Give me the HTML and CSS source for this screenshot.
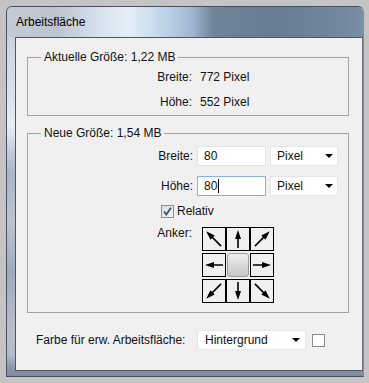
FILE: index.html
```html
<!DOCTYPE html>
<html>
<head>
  <meta charset="UTF-8">
  <title>Arbeitsfläche</title>
  <link rel="stylesheet" href="styles.css">
</head>
<body>
  <div class="window">
    <div class="titlebar">Arbeitsfläche</div>
    <div class="frame">
      <div class="content">

        <!-- current size -->
        <fieldset class="group group-current">
          <legend>Aktuelle Größe: 1,22 MB</legend>
          <div class="info-row"><span class="label">Breite:</span><span class="value">772 Pixel</span></div>
          <div class="info-row"><span class="label">Höhe:</span><span class="value">552 Pixel</span></div>
        </fieldset>

        <!-- new size -->
        <fieldset class="group group-new">
          <legend>Neue Größe: 1,54 MB</legend>
          <div class="field-row">
            <span class="label">Breite:</span>
            <div class="textbox">80</div>
            <div class="select">Pixel<span class="caret"></span></div>
          </div>
          <div class="field-row second">
            <span class="label">Höhe:</span>
            <div class="textbox focused">80<span class="cursor"></span></div>
            <div class="select">Pixel<span class="caret"></span></div>
          </div>
          <div class="check-row">
            <span class="checkbox">
              <svg width="11" height="11" viewBox="0 0 11 11"><path d="M2 5.5L4.3 8.5L9 1.8" fill="none" stroke="#3d4f78" stroke-width="1.8"/></svg>
            </span>
            Relativ
          </div>
          <div class="anchor-row">
            <span class="label">Anker:</span>
            <div class="anchor-grid">
              <div class="cell"><svg viewBox="0 0 22 22"><g transform="rotate(315 11 11)"><path d="M11 21V7" stroke="#000" stroke-width="1.6"/><path d="M11 0L8 9H14Z"/></g></svg></div>
              <div class="cell"><svg viewBox="0 0 22 22"><path d="M11 20V9" stroke="#000" stroke-width="1.6"/><path d="M11 2L8 11H14Z"/></svg></div>
              <div class="cell"><svg viewBox="0 0 22 22"><g transform="rotate(45 11 11)"><path d="M11 21V7" stroke="#000" stroke-width="1.6"/><path d="M11 0L8 9H14Z"/></g></svg></div>
              <div class="cell"><svg viewBox="0 0 22 22"><g transform="rotate(270 11 11)"><path d="M11 20V9" stroke="#000" stroke-width="1.6"/><path d="M11 2L8 11H14Z"/></g></svg></div>
              <div class="cell center"></div>
              <div class="cell"><svg viewBox="0 0 22 22"><g transform="rotate(90 11 11)"><path d="M11 20V9" stroke="#000" stroke-width="1.6"/><path d="M11 2L8 11H14Z"/></g></svg></div>
              <div class="cell"><svg viewBox="0 0 22 22"><g transform="rotate(225 11 11)"><path d="M11 21V7" stroke="#000" stroke-width="1.6"/><path d="M11 0L8 9H14Z"/></g></svg></div>
              <div class="cell"><svg viewBox="0 0 22 22"><g transform="rotate(180 11 11)"><path d="M11 20V9" stroke="#000" stroke-width="1.6"/><path d="M11 2L8 11H14Z"/></g></svg></div>
              <div class="cell"><svg viewBox="0 0 22 22"><g transform="rotate(135 11 11)"><path d="M11 21V7" stroke="#000" stroke-width="1.6"/><path d="M11 0L8 9H14Z"/></g></svg></div>
            </div>
          </div>
        </fieldset>

        <!-- canvas extension colour -->
        <div class="fill-row">
          <span class="fill-label">Farbe für erw. Arbeitsfläche:</span>
          <div class="select wide">Hintergrund<span class="caret"></span></div>
          <span class="swatch"></span>
        </div>

      </div>
    </div>
  </div>
</body>
</html>
```

FILE: styles.css
```css
body {
  margin: 0;
  width: 369px;
  height: 383px;
  overflow: hidden;
  background: #c4c4c4;
  font-family: "Liberation Sans", Arial, sans-serif;
  font-size: 12px;
  color: #111;
}

.window {
  margin: 6px 0 0 6px;
  width: 358px;
  height: 371px;
  box-sizing: border-box;
  border: 1px solid #4b5058;
  border-right-color: #8a8e94;
  border-radius: 6px 6px 0 0;
  display: flex;
  flex-direction: column;
  background: linear-gradient(to bottom, #c6ccd4 0%, #d9e3ee 25%, #e6edf4 32%, #a9b5c6 45%, #bcc4ce 58%, #9eabbf 72%, #b7bfca 88%, #aeb8c6 100%);
  overflow: hidden;
}

.titlebar {
  height: 30px;
  line-height: 31px;
  padding-left: 9px;
  color: #000;
  background: linear-gradient(to right, #c4cad3 0%, #bcc4cf 14%, #d6e2ee 26%, #e4eef7 34%, #bfd5ea 44%, #9fb7cf 52%, #6f8499 58%, #687d93 75%, #6f859b 90%, #7a8ea4 100%);
}

.frame {
  flex: 1;
  display: flex;
  padding: 0 0 5px 8px;
  background: linear-gradient(to right, transparent 0, transparent 100%), linear-gradient(to bottom, transparent 94%, #8f9bb0 97%, #7d89a0 100%);
}

.content {
  flex: 1;
  background: #f0f0f0;
  border: 1px solid #4f555d;
  border-right-color: #6b7079;
  display: flex;
  flex-direction: column;
}

/* group boxes */
.group {
  margin: 12px 0 0 11px;
  width: 322px;
  box-sizing: border-box;
  padding: 0;
  border: 1px solid #a3a3a3;
}

.group legend {
  margin-left: 13px;
  padding: 0 3px;
  line-height: 14px;
}

.group-current {
  padding-bottom: 1px;
}

.group-new {
  margin-top: 10px;
  padding-bottom: 9px;
}

.label {
  display: inline-block;
  text-align: right;
  flex: none;
}

.info-row {
  display: flex;
  align-items: center;
  height: 25px;
}

.info-row .label {
  width: 164px;
}

.info-row .value {
  margin-left: 8px;
}

.field-row {
  display: flex;
  align-items: center;
  height: 20px;
  margin-top: 6px;
}

.field-row.second {
  margin-top: 10px;
}

.field-row .label {
  width: 165px;
}

.textbox {
  margin-left: 4px;
  width: 69px;
  height: 20px;
  box-sizing: border-box;
  background: #fff;
  border: 1px solid #e2e3e5;
  padding-left: 6px;
  line-height: 18px;
  display: flex;
  align-items: center;
}

.textbox.focused {
  border-color: #8db2dc;
}

.cursor {
  display: inline-block;
  width: 1px;
  height: 14px;
  background: #000;
  margin-left: 1px;
}

.select {
  margin-left: 4px;
  width: 68px;
  height: 20px;
  box-sizing: border-box;
  background: #fff;
  border: 1px solid #e6e6e6;
  padding-left: 6px;
  display: flex;
  align-items: center;
  position: relative;
}

.caret {
  margin-left: auto;
  margin-right: 4px;
  width: 0;
  height: 0;
  border-left: 4px solid transparent;
  border-right: 4px solid transparent;
  border-top: 4px solid #000;
}

.check-row {
  display: flex;
  align-items: center;
  height: 22px;
  margin-top: 4px;
  padding-left: 133px;
}

.checkbox {
  width: 13px;
  height: 13px;
  box-sizing: border-box;
  border: 1px solid #8e8f8f;
  background: linear-gradient(to bottom right, #dcdcdc, #f6f6f6);
  margin-right: 3px;
  display: flex;
  align-items: center;
  justify-content: center;
}

.anchor-row {
  display: flex;
  margin-top: 5px;
}

.anchor-row .label {
  width: 164px;
  line-height: 14px;
  margin-top: -1px;
}

.anchor-grid {
  margin-left: 10px;
  display: grid;
  grid-template-columns: repeat(3, 24px);
  grid-auto-rows: 24px;
  row-gap: 2px;
}

.cell {
  border: 1px solid #000;
  background: #f0f0f0;
}

.cell svg {
  display: block;
  width: 22px;
  height: 22px;
}

.cell.center {
  border: 1px solid #9c9c9c;
  border-radius: 3px;
  background: linear-gradient(to bottom, #efefef, #d4d4d4 60%, #c9c9c9);
  margin: 0 1px;
}

/* bottom row */
.fill-row {
  display: flex;
  align-items: center;
  margin-top: 17px;
}

.fill-label {
  width: 181px;
  box-sizing: border-box;
  padding-left: 20px;
}

.select.wide {
  margin-left: 0;
  width: 109px;
  padding-left: 7px;
}

.select.wide .caret {
  margin-right: 5px;
}

.swatch {
  margin-left: 6px;
  width: 13px;
  height: 13px;
  box-sizing: border-box;
  border: 1px solid #8b8b8b;
  background: #fff;
}
```
